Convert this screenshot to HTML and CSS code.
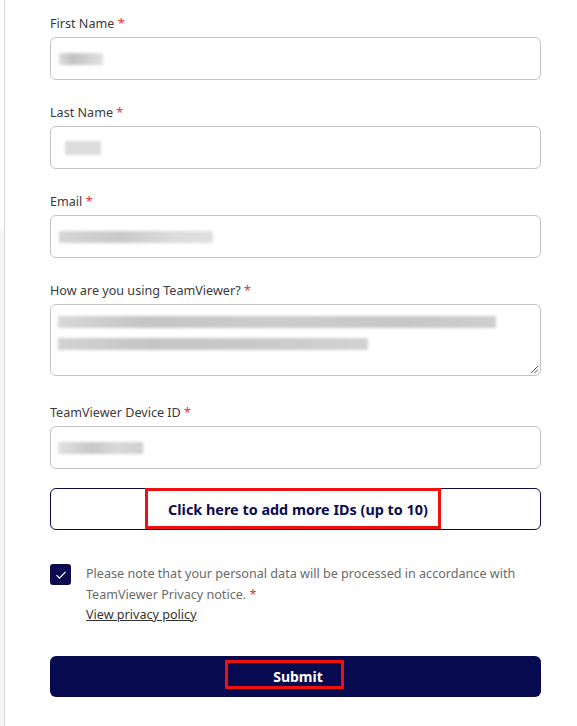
FILE: index.html
```html
<!DOCTYPE html>
<html lang="en">

<head>
    <meta charset="UTF-8">
    <meta name="viewport" content="width=device-width, initial-scale=1.0">
    <link rel="stylesheet" href="styles.css">
</head>

<body>
    <div class="page">
        <div class="rail"></div>

        <form class="form-panel">
            <div class="field">
                <label class="field-label">First Name <span class="req">*</span></label>
                <div class="input">
                    <span class="redact redact-first"></span>
                </div>
            </div>

            <div class="field">
                <label class="field-label">Last Name <span class="req">*</span></label>
                <div class="input">
                    <span class="redact redact-last"></span>
                </div>
            </div>

            <div class="field">
                <label class="field-label">Email <span class="req">*</span></label>
                <div class="input">
                    <span class="redact redact-email"></span>
                </div>
            </div>

            <div class="field field-textarea">
                <label class="field-label">How are you using TeamViewer? <span class="req">*</span></label>
                <div class="input textarea">
                    <span class="redact redact-line1"></span>
                    <span class="redact redact-line2"></span>
                    <svg class="grip" width="9" height="9" viewBox="0 0 9 9">
                        <path d="M1 8 L8 1 M4.5 8 L8 4.5" stroke="#555" stroke-width="1" fill="none" />
                    </svg>
                </div>
            </div>

            <div class="field field-last">
                <label class="field-label">TeamViewer Device ID <span class="req">*</span></label>
                <div class="input">
                    <span class="redact redact-id"></span>
                </div>
            </div>

            <button type="button" class="btn-outline">
                Click here to add more IDs (up to 10)
                <span class="mark mark-add"></span>
            </button>

            <div class="consent">
                <span class="checkbox">
                    <svg width="12" height="10" viewBox="0 0 12 10">
                        <path d="M1.5 5.2 L4.5 8.2 L10.5 1.8" stroke="#fff" stroke-width="1.2" fill="none" />
                    </svg>
                </span>
                <div class="consent-text">
                    <p class="consent-line">Please note that your personal data will be processed in accordance with
                        TeamViewer Privacy notice. <span class="req">*</span></p>
                    <a class="policy-link" href="#">View privacy policy</a>
                </div>
            </div>

            <button type="button" class="btn-submit">
                Submit
                <span class="mark mark-submit"></span>
            </button>
        </form>
    </div>
</body>

</html>
```

FILE: styles.css
```css
/* Base page */
body {
    margin: 0;
    background: #fff;
    font-family: "Noto Sans", "Open Sans", sans-serif;
    color: #333;
}

.page {
    display: flex;
    min-height: 726px;
}

/* Grey strip on the far left */
.rail {
    width: 4px;
    flex-shrink: 0;
    background: linear-gradient(#fff 231px, #f4f4f4 231px);
}

.form-panel {
    flex: 1;
    border-left: 1px solid #d6d6d6;
    padding: 15px 36px 0 45px;
}

/* Fields */
.field {
    margin-bottom: 24px;
}

.field-textarea {
    margin-bottom: 28px;
}

.field-last {
    margin-bottom: 19px;
}

.field-label {
    display: block;
    font-size: 12.6px;
    line-height: 18px;
    color: #3a3a3a;
    margin-bottom: 4px;
}

.req {
    color: #e0313b;
}

.input {
    position: relative;
    box-sizing: border-box;
    height: 43px;
    border: 1px solid #c4c4c4;
    border-radius: 6px;
    background: #fff;
    padding: 0 6px;
    display: flex;
    flex-direction: column;
    justify-content: center;
}

.textarea {
    height: 72px;
    justify-content: flex-start;
    padding-top: 11px;
}

.grip {
    position: absolute;
    right: 1px;
    bottom: 1px;
}

/* Pixelated redactions */
.redact {
    display: block;
    height: 12px;
    background: linear-gradient(90deg, #dcdcdc, #c2c2c2 30%, #cfcfcf 60%, #e2e2e2);
    filter: blur(1.5px);
}

.redact-first {
    width: 44px;
    margin-left: 2px;
}

.redact-last {
    width: 36px;
    margin-left: 8px;
    height: 14px;
    background: #dcdcdc;
}

.redact-email {
    width: 154px;
    margin-left: 2px;
    background: linear-gradient(90deg, #d6d6d6, #c8c8c8 40%, #dadada 70%, #e0e0e0);
}

.redact-line1 {
    width: 438px;
    margin: 0 0 10px 1px;
    background: linear-gradient(90deg, #d8d8d8, #c4c4c4 20%, #cccccc 50%, #c6c6c6 80%, #cfcfcf);
}

.redact-line2 {
    width: 310px;
    margin-left: 1px;
    background: linear-gradient(90deg, #d2d2d2, #c4c4c4 30%, #cacaca 70%, #d2d2d2);
}

.redact-id {
    width: 85px;
    margin-left: 1px;
    background: linear-gradient(90deg, #e0e0e0, #c8c8c8 40%, #d8d8d8 70%, #d0d0d0);
}

/* Buttons */
.btn-outline,
.btn-submit {
    position: relative;
    display: block;
    width: 100%;
    box-sizing: border-box;
    font-family: "Noto Sans", "Open Sans", sans-serif;
    font-size: 14.4px;
    font-weight: 700;
    border-radius: 6px;
    padding: 0 0 0 5px;
    cursor: pointer;
}

.btn-outline {
    height: 42px;
    background: #fff;
    color: #0b0b4e;
    border: 1px solid #0b0b4e;
}

.btn-submit {
    height: 41px;
    background: #070a4e;
    color: #fff;
    border: none;
    margin-top: 30px;
    font-size: 14px;
}

/* Red annotation frames */
.mark {
    position: absolute;
    box-sizing: border-box;
    border: 3px solid #f01010;
}

.mark-add {
    left: 94px;
    top: -1px;
    width: 296px;
    height: 41px;
}

.mark-submit {
    left: 175px;
    top: 4px;
    width: 119px;
    height: 29px;
}

/* Consent row */
.consent {
    display: flex;
    align-items: flex-start;
    gap: 15px;
    margin-top: 34px;
}

.checkbox {
    flex-shrink: 0;
    width: 21px;
    height: 21px;
    border-radius: 3px;
    background: #0b0b4e;
    display: flex;
    align-items: center;
    justify-content: center;
}

.consent-text {
    font-size: 12.6px;
    line-height: 20.5px;
    color: #6a6a6a;
}

.consent-line {
    margin: 0;
}

.policy-link {
    display: block;
    color: #333;
    text-decoration: underline;
}
```
